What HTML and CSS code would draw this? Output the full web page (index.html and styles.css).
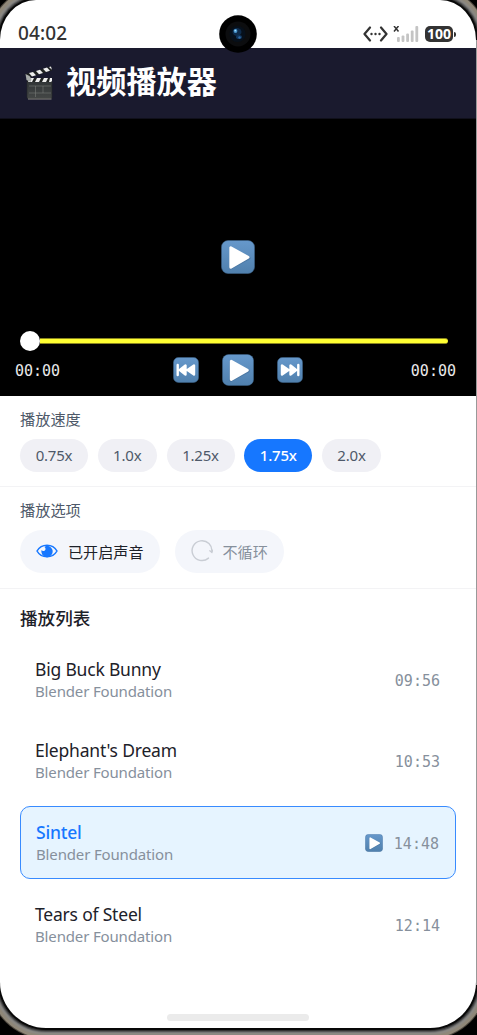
FILE: index.html
```html
<!DOCTYPE html>
<html lang="zh-CN">
<head>
<meta charset="utf-8">
<title>视频播放器</title>
<link rel="stylesheet" href="styles.css">
</head>
<body>
<svg class="defs" width="0" height="0">
  <defs>
    <linearGradient id="blue" x1="0" y1="0" x2="0" y2="1"><stop offset="0" stop-color="#6698cb"/><stop offset="1" stop-color="#5080ad"/></linearGradient>
    <linearGradient id="board" x1="0" y1="0" x2="0" y2="1"><stop offset="0" stop-color="#303436"/><stop offset="1" stop-color="#444746"/></linearGradient>
    <symbol id="play" viewBox="0 0 34 34">
      <rect x=".5" y=".5" width="33" height="33" rx="6.5" fill="url(#blue)" stroke="#3f668e" stroke-width=".5"/>
      <path d="M9.5 8.500v19.500L28 18z" fill="#3f668e" stroke="#3f668e" stroke-width="3" stroke-linejoin="round" opacity=".5"/>
      <path d="M9.800 7.800v19.400L27 17.200z" fill="#fff" stroke="#fff" stroke-width="3" stroke-linejoin="round"/>
    </symbol>
    <symbol id="prev" viewBox="0 0 26 26">
      <rect x=".5" y=".5" width="25" height="25" rx="5" fill="url(#blue)" stroke="#3f668e" stroke-width=".5"/>
      <path d="M4.700 8v10M12.500 8.500v9L6.800 13zM21 8.500v9L14.500 13z" fill="#fff" stroke="#fff" stroke-width="2.400" stroke-linejoin="round" stroke-linecap="round"/>
    </symbol>
  </defs>
</svg>
<main class="phone">
  <div class="screen">
    <header class="status">
      <span class="clock">04:02</span>
      <div class="status-icons">
        <svg width="25" height="16" viewBox="0 0 25 16"><path d="M7 1.500 1.500 8 7 14.500M18 1.500 23.500 8 18 14.500" fill="none" stroke="#333" stroke-width="2.200" stroke-linecap="round" stroke-linejoin="round"/><g fill="#333"><circle cx="8.500" cy="8" r="1.200"/><circle cx="12.500" cy="8" r="1.200"/><circle cx="16.500" cy="8" r="1.200"/></g></svg>
        <svg class="signal" width="26" height="16" viewBox="0 0 26 16"><path d="m1 0 4.500 5.500m0-5.500L1 5.500" stroke="#333" stroke-width="1.500"/><g fill="#c4c4c4"><rect x="4" y="11" width="2.800" height="5" rx="1"/><rect x="8.600" y="9.500" width="2.800" height="6.500" rx="1"/><rect x="13.200" y="7.500" width="2.800" height="8.500" rx="1"/><rect x="17.800" y="4.500" width="2.800" height="11.500" rx="1"/><rect x="22.400" y="0" width="2.800" height="16" rx="1"/></g></svg>
        <span class="battery">100</span><i class="battery-tip"></i>
      </div>
      <svg class="camera" width="38" height="38" viewBox="0 0 38 38"><circle cx="19" cy="19" r="18.800" fill="#000"/><circle cx="19" cy="19" r="12.500" fill="#0c0d0f"/><circle cx="18.500" cy="19" r="8" fill="#07101b"/><ellipse cx="18" cy="17" rx="4.500" ry="4" fill="#0e2b4b"/><ellipse cx="20" cy="22" rx="3" ry="2" fill="#12365d"/><circle cx="16.500" cy="16" r="1.900" fill="#4a95cc"/><circle cx="16.300" cy="15.600" r=".8" fill="#a8e2ff"/><circle cx="20.500" cy="22.500" r="1.200" fill="#326ca7"/></svg>
    </header>

    <div class="titlebar">
      <svg width="30" height="36" viewBox="0 0 30 36">
        <rect x="3" y="16" width="25" height="17.500" rx="1" fill="url(#board)" stroke="#242727" stroke-width=".6"/>
        <path d="M4 34h23.500" stroke="#8b8a83" stroke-width="1"/>
        <path d="M5 21h22M5 28h22M11.500 21v11M19 21v7" stroke="#777a77" stroke-width=".6" fill="none"/>
        <path d="M3 13h25v4H3z" fill="#202322"/>
        <path d="m6 13h4l-2 4H4zM13 13h4l-2 4h-4zM20 13h4l-2 4h-4zM26 13h2v3l-1 1h-2z" fill="#eee"/>
        <path d="M1.500 9 27 1.500 28 5.500 3 13z" fill="#202322"/>
        <path d="m5 8 4-1 3 3.200-4 1.200zM12 6l4-1.200 3 3.200-4 1.200zM19 3.800l4-1.200 3 3.200-4 1.200zM25 2l2-.6.900 3.400z" fill="#eee"/>
        <path d="m1.500 9 4 2 2 3-1 3-4-2z" fill="#a9adab"/>
      </svg>
      <h1>视频播放器</h1>
    </div>

    <section class="video">
      <div class="stage"><svg width="34" height="34"><use href="#play"/></svg></div>
      <div class="slider"><i class="thumb"></i><i class="track"></i></div>
      <div class="controls">
        <span class="time">00:00</span>
        <div class="buttons">
          <svg width="26" height="26"><use href="#prev"/></svg>
          <svg width="32" height="32"><use href="#play"/></svg>
          <svg width="26" height="26" viewBox="0 0 26 26"><rect x=".5" y=".5" width="25" height="25" rx="5" fill="url(#blue)" stroke="#3f668e" stroke-width=".5"/><path d="M21.300 8v10M13.500 8.500v9L19.200 13zM5 8.500v9L11.500 13z" fill="#fff" stroke="#fff" stroke-width="2.400" stroke-linejoin="round" stroke-linecap="round"/></svg>
        </div>
        <span class="time">00:00</span>
      </div>
    </section>

    <section class="speed">
      <h2>播放速度</h2>
      <div class="chips">
        <span class="chip wide">0.75x</span><span class="chip">1.0x</span><span class="chip wide">1.25x</span><span class="chip wide active">1.75x</span><span class="chip">2.0x</span>
      </div>
    </section>

    <section class="options">
      <h2>播放选项</h2>
      <div class="toggles">
        <span class="toggle sound"><svg width="22" height="22" viewBox="0 0 22 22"><path d="M1 11C5.500 3.200 16.500 3.200 21 11 16.500 18.800 5.500 18.800 1 11z" fill="none" stroke="#1677ff" stroke-width="1.500"/><path d="M11 5.800a5.700 5.700 0 1 1-5.500 4.200c.8 1.500 3.800 1.300 4-.8.100-1.200-.5-1.700-1.200-2.100A5.700 5.700 0 0 1 11 5.800z" fill="#1677ff"/></svg>已开启声音</span>
        <span class="toggle loop"><svg width="22" height="22" viewBox="0 0 22 22"><path d="M17.500 18.100A9.900 9.900 0 1 1 20.800 12" fill="none" stroke="#c9cdd4" stroke-width="1.400" stroke-linecap="round"/><path d="m18.800 10.800 2 1.500.7-2" fill="none" stroke="#c9cdd4" stroke-width="1.400" stroke-linecap="round"/></svg>不循环</span>
      </div>
    </section>

    <section class="playlist">
      <h3>播放列表</h3>
      <article class="item"><div><b>Big Buck Bunny</b><small>Blender Foundation</small></div><time>09:56</time></article>
      <article class="item"><div><b>Elephant's Dream</b><small>Blender Foundation</small></div><time>10:53</time></article>
      <article class="item current"><div><b>Sintel</b><small>Blender Foundation</small></div><svg width="18" height="18"><use href="#play"/></svg><time>14:48</time></article>
      <article class="item"><div><b>Tears of Steel</b><small>Blender Foundation</small></div><time>12:14</time></article>
    </section>
    <div class="home"></div>
  </div>
</main>
</body>
</html>
```
FILE: styles.css
```css
* { box-sizing: border-box; }
body { margin: 0; background: #000; font-family: "Noto Sans", "Noto Sans CJK SC", sans-serif; }
svg { display: block; flex: none; }
.defs { position: absolute; }
h1, h2, h3 { margin: 0; font-family: "Noto Sans CJK SC", sans-serif; }

.phone { position: relative; width: 477px; height: 1035px; overflow: hidden; background: #000; }
.phone::after { content: ""; position: absolute; right: 0; top: 40px; width: 1px; height: 945px; background: #999; }
.screen {
  width: 476px; height: 1028px; background: #fff;
  border-radius: 36px 36px 46px 46px / 40px 40px 46px 46px;
  box-shadow: 0 0 0 2px #080808, 0 0 0 3px #333, 0 0 0 4px #555, 0 0 0 5px #777, 0 0 0 7px #8b8882, 0 0 0 10px #8f8778, 0 0 0 11px #4c463d;
  display: flex; flex-direction: column;
}

.status { position: relative; height: 48px; padding: 19px 20px 0 18px; display: flex; justify-content: space-between; color: #333; flex: none; }
.clock { font: 500 19px/28px "Noto Sans", sans-serif; letter-spacing: .1px; }
.status-icons { height: 30px; display: flex; align-items: center; }
.signal { margin: 0 6px 0 5px; }
.battery { width: 28px; height: 16px; border-radius: 5px; background: #333; color: #fff; font: 700 14px/16px "Noto Sans", sans-serif; text-align: center; }
.battery-tip { width: 2px; height: 5px; margin-left: 1px; border-radius: 0 2px 2px 0; background: #333; }
.camera { position: absolute; left: 219px; top: 15px; }

.titlebar { height: 71px; padding: 0 24px; background: #1a1a2e; border-bottom: 1px solid #10101b; display: flex; align-items: center; gap: 12px; color: #fff; flex: none; }
.titlebar h1 { font-size: 30.200px; line-height: 44px; font-weight: 700; padding-bottom: 6px; }

.video { height: 277px; padding-top: 121px; background: #000; flex: none; }
.stage { display: flex; justify-content: center; }
.slider { display: flex; align-items: center; height: 20px; margin: 57px 28px 0 20px; }
.thumb { width: 20px; height: 20px; border-radius: 50%; background: #fff; }
.track { flex: 1; height: 6px; border-radius: 0 3px 3px 0; background: #ffff32; border: solid #8b861e; border-width: 1px 0; }
.controls { display: grid; grid-template-columns: 1fr auto 1fr; align-items: center; padding: 0 20px 0 15px; height: 38px; }
.buttons { display: flex; align-items: center; gap: 23px; padding-left: 5px; }
.time, time { font: 15px/20px "DejaVu Sans Mono", monospace; padding-top: 1px; }
.time { color: #e9e9e9; }
.time:last-child { text-align: right; }

.speed { height: 91px; padding: 12px 20px 0; border-bottom: 1px solid #f3f3f5; flex: none; }
.speed h2, .options h2 { font-size: 15.200px; line-height: 20px; font-weight: 400; color: #4e5969; }
.chips { display: flex; gap: 9.750px; margin-top: 11px; }
.chip { width: 59px; height: 33px; border-radius: 17px; background: #f0f0f5; color: #4e5969; font-size: 15px; line-height: 33px; letter-spacing: -.2px; text-align: center; }
.chip.wide { width: 68px; }
.chip.active { background: #1677ff; color: #fff; font-weight: 500; }

.options { height: 102px; padding: 12px 20px 0; border-bottom: 1px solid #f3f3f5; flex: none; }
.toggles { display: flex; gap: 14.500px; margin-top: 11px; }
.toggle { height: 43px; border-radius: 22px; background: #f4f6fb; display: flex; align-items: center; padding: 0 0 2px 16px; font: 15.100px/20px "Noto Sans CJK SC", sans-serif; }
.toggle svg { margin-top: 1px; }
.sound { width: 140px; gap: 10px; color: #1d2129; }
.loop { width: 109px; gap: 10px; color: #86909c; }

.playlist { padding: 16px 20px 0; }
.playlist h3 { height: 38px; font-size: 17.600px; line-height: 26px; font-weight: 500; color: #1d2129; }
.item { height: 72px; margin-bottom: 9.500px; padding: 0 16px 0 15px; display: flex; align-items: center; }
.item div { flex: 1; }
.item b, .item small { display: block; white-space: nowrap; }
.item b { font-size: 17.500px; line-height: 23px; letter-spacing: -.2px; font-weight: 400; color: #1d2129; }
.item small { font-size: 15px; line-height: 20px; letter-spacing: -.15px; color: #86909c; }
.item time { color: #86909c; padding-top: 3px; }
.item.current { height: 73px; background: #e6f4ff; border: 1px solid #388bff; border-radius: 10px; }
.item.current div { padding-bottom: 1px; }
.item.current b { font-weight: 500; color: #1677ff; }
.item.current svg { margin-right: 11px; }

.home { width: 142px; height: 7px; margin: auto auto 7px; border-radius: 4px; background: #ebebeb; }
```
